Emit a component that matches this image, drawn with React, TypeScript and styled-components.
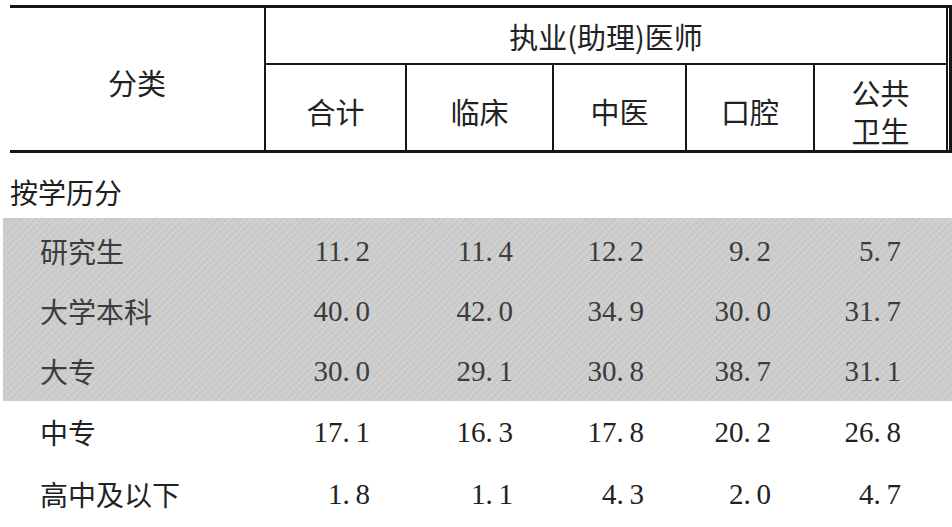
import React from "react";
import styled, { createGlobalStyle } from "styled-components";

const Global = createGlobalStyle`
  html, body { margin: 0; padding: 0; background: #fff; }
  body { font-family: "Noto Sans CJK SC", sans-serif; }
`;

const COLS = "256px 141px 147px 133px 128px 133px 1fr";
const PADS = [37, 41, 43, 44, 47];

const Page = styled.div`
  width: 952px;
  height: 527px;
  overflow: hidden;
  background: #fff;
  padding-top: 5px;
  box-sizing: border-box;
`;

const Header = styled.div`
  display: grid;
  grid-template-columns: ${COLS};
  grid-template-rows: 57px 85px;
  margin-left: 10px;
  border-top: 3px solid #151515;
  border-bottom: 3px solid #151515;
  font-family: "Noto Sans CJK SC", sans-serif;
  font-size: 29px;
  color: #222;
`;

const HeadCell = styled.div`
  display: flex;
  flex-direction: column;
  align-items: center;
  justify-content: center;
  border-right: 2px solid #151515;
  line-height: 38px;
  box-sizing: border-box;
`;

const Corner = styled(HeadCell)`
  grid-row: 1 / span 2;
  padding-top: 6px;
`;

const Group = styled(HeadCell)`
  grid-column: 2 / span 5;
  border-bottom: 2px solid #151515;
`;

const SubCell = styled(HeadCell)`
  padding-top: 6px;
`;

const Edge = styled.div`
  grid-column: 7;
  grid-row: 1 / span 2;
  margin-left: 1px;
  border-left: 3px solid #151515;
`;

const SectionTitle = styled.div`
  height: 65px;
  box-sizing: border-box;
  padding: 13px 0 0 10px;
  display: flex;
  align-items: center;
  font-size: 28px;
  color: #1e1e1e;
`;

const Band = styled.div`
  margin-left: 3px;
  padding: 3px 0 0 7px;
  height: 183px;
  box-sizing: border-box;
  background-color: #cbcbcb;
  background-image:
    repeating-linear-gradient(135deg, rgba(255,255,255,0.12) 0 2px, rgba(0,0,0,0) 2px 5px),
    repeating-linear-gradient(45deg, rgba(0,0,0,0.025) 0 1px, rgba(0,0,0,0) 1px 4px);
`;

const Plain = styled.div`
  margin-left: 10px;
`;

const Row = styled.div<{ $h: number; $tone: string }>`
  display: grid;
  grid-template-columns: ${COLS};
  height: ${(p) => p.$h}px;
  align-items: center;
  color: ${(p) => p.$tone};
`;

const Label = styled.div`
  padding-left: 30px;
  font-family: "Noto Sans CJK SC", sans-serif;
  font-size: 28px;
  white-space: nowrap;
`;

const Num = styled.div<{ $pad: number }>`
  text-align: right;
  padding-right: ${(p) => p.$pad}px;
  font-family: "Liberation Serif", "Times New Roman", serif;
  font-size: 29px;
  white-space: nowrap;
`;

const Dot = styled.span`
  display: inline-block;
  width: 0.45em;
  text-align: left;
`;

const fmt = (v: string) => {
  const [a, b] = v.split(".");
  return (
    <>
      {a}
      <Dot>.</Dot>
      {b}
    </>
  );
};

type R = [string, string[]];
const shaded: R[] = [
  ["研究生", ["11.2", "11.4", "12.2", "9.2", "5.7"]],
  ["大学本科", ["40.0", "42.0", "34.9", "30.0", "31.7"]],
  ["大专", ["30.0", "29.1", "30.8", "38.7", "31.1"]],
];
const plain: R[] = [
  ["中专", ["17.1", "16.3", "17.8", "20.2", "26.8"]],
  ["高中及以下", ["1.8", "1.1", "4.3", "2.0", "4.7"]],
];

const DataRow = ({ r, h, tone }: { r: R; h: number; tone: string }) => (
  <Row $h={h} $tone={tone}>
    <Label>{r[0]}</Label>
    {r[1].map((v, i) => (
      <Num key={i} $pad={PADS[i]}>
        {fmt(v)}
      </Num>
    ))}
  </Row>
);

export default function App() {
  return (
    <>
      <Global />
      <Page>
        <Header>
          <Corner>分类</Corner>
          <Group>执业(助理)医师</Group>
          <Edge />
          <SubCell>合计</SubCell>
          <SubCell>临床</SubCell>
          <SubCell>中医</SubCell>
          <SubCell>口腔</SubCell>
          <SubCell>
            <span>公共</span>
            <span>卫生</span>
          </SubCell>
        </Header>
        <SectionTitle>按学历分</SectionTitle>
        <Band>
          {shaded.map((r) => (
            <DataRow key={r[0]} r={r} h={60} tone="#3c3c3c" />
          ))}
        </Band>
        <Plain>
          {plain.map((r) => (
            <DataRow key={r[0]} r={r} h={62} tone="#222" />
          ))}
        </Plain>
      </Page>
    </>
  );
}
